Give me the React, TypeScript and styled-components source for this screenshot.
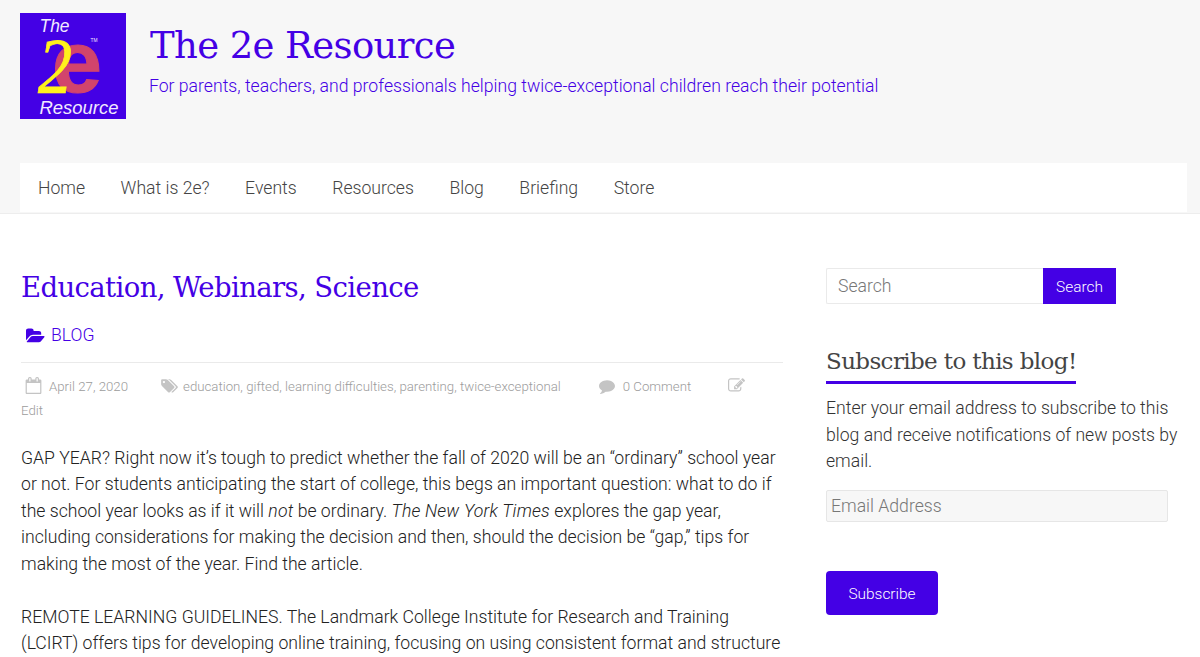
import React from 'react';
import styled, { createGlobalStyle } from 'styled-components';

const violet = '#4400e5';
const slab = `'Roboto Slab', 'DejaVu Serif', serif`;

const GlobalStyle = createGlobalStyle`
  *, *::before, *::after { box-sizing: border-box; }
  body {
    margin: 0;
    background: #fff;
    color: #333;
    font: 300 17.64px/26.5px Roboto, sans-serif;
  }
  h1, h2, h3 { margin: 0; font-weight: 400; }
  p { margin: 0; font-weight: 300; }
  em { letter-spacing: 0.2px; }
  a { color: inherit; text-decoration: none; }
`;

const Page = styled.div`
  height: 657px;
  overflow: hidden;
`;

const Header = styled.header`
  height: 214px;
  padding: 13px 13px 0 20px;
  background: #f7f7f7;
  border-bottom: 1px solid #ededed;
`;

const Brand = styled.div`
  display: flex;
  gap: 23px;
  height: 150px;
`;

const Logo = styled.svg`
  flex: none;
  width: 106px;
  height: 106px;
`;

const BrandText = styled.div`
  padding-top: 10px;
  color: ${violet};
  white-space: nowrap;
`;

const SiteTitle = styled.h1`
  padding-left: 1px;
  font-family: ${slab};
  font-size: 37px;
  line-height: 46px;
  letter-spacing: -0.62px;
`;

const Tagline = styled.p`
  padding-top: 4px;
`;

const Nav = styled.nav`
  display: flex;
  gap: 35.5px;
  height: 49px;
  padding: 12px 18px 0;
  background: #fff;
  color: #444;
`;

const Columns = styled.div`
  display: flex;
  gap: 43px;
  padding: 54px 20px 0 21px;
`;

const Article = styled.main`
  flex: none;
  width: 762px;
`;

const PostTitle = styled.h2`
  color: ${violet};
  font-family: ${slab};
  font-size: 27.5px;
  line-height: 38px;
  letter-spacing: -0.62px;
  white-space: nowrap;
`;

const Category = styled.div`
  display: flex;
  align-items: center;
  gap: 6px;
  height: 27px;
  margin-top: 16px;
  padding-left: 5px;
  color: ${violet};
`;

const Meta = styled.div`
  display: flex;
  flex-wrap: wrap;
  margin-top: 13px;
  padding-top: 12px;
  border-top: 1px solid #eaeaea;
  color: #9c9c9c;
  font-size: 13.24px;
  line-height: 24px;
  white-space: nowrap;
`;

const MetaItem = styled.span<{ $gap: number; $after?: number }>`
  display: flex;
  align-items: center;
  gap: ${p => p.$gap}px;
  margin-right: ${p => p.$after ?? 0}px;

  &:first-child { margin-left: 4px; }
`;

const EditLink = styled.a`
  flex-basis: 100%;
`;

const Icon = styled.svg<{ $w: number; $h: number }>`
  flex: none;
  width: ${p => p.$w}px;
  height: ${p => p.$h}px;
  fill: currentColor;
`;

const MetaIcon = styled(Icon)`
  margin-bottom: 3px;
  color: #c4c4c4;
`;

const Paragraph = styled.p`
  margin-bottom: 26.5px;
  color: #222;
  white-space: nowrap;

  ${Meta} + & { margin-top: 21.6px; }
`;

const Sidebar = styled.aside`
  flex: none;
  width: 354px;
`;

const SearchForm = styled.form`
  display: flex;
  height: 36px;
`;

const SearchInput = styled.input`
  width: 217px;
  padding: 1px 11px 0;
  border: 1px solid #eaeaea;
  border-right: 0;
  border-radius: 2px 0 0 2px;
  background: #fff;
  font: inherit;
  outline: 0;
  &::placeholder { color: #777; opacity: 1; }
`;

const Button = styled.button`
  padding: 1px 0 0;
  border: 0;
  background: ${violet};
  color: #fff;
  font: 300 15.43px Roboto, sans-serif;
`;

const SearchButton = styled(Button)`
  width: 73px;
`;

const SubscribeButton = styled(Button)`
  width: 112px;
  height: 44px;
  margin-top: 49px;
  padding-top: 2px;
  border-radius: 4px;
`;

const WidgetTitle = styled.h3`
  width: 250px;
  height: 41px;
  margin: 39px 0 11px;
  border-bottom: 3px solid ${violet};
  color: #444;
  font-family: ${slab};
  font-size: 23px;
  line-height: 36px;
  letter-spacing: -0.62px;
  white-space: nowrap;
`;

const EmailInput = styled.input`
  display: block;
  width: 342px;
  height: 32px;
  margin-top: 15px;
  padding: 0 4px;
  border: 1px solid #e6e6e6;
  border-radius: 2px;
  background: #f7f7f7;
  font: inherit;
  outline: 0;
  &::placeholder { color: #777; opacity: 1; }
`;

const links = ['Home', 'What is 2e?', 'Events', 'Resources', 'Blog', 'Briefing', 'Store'];

export default function App() {
  return (
    <Page>
      <GlobalStyle />
      <Header>
        <Brand>
          <Logo viewBox="0 0 106 106" role="img" aria-label="The 2e Resource">
            <rect width="106" height="106" fill="#4400e5" />
            <text x="19.5" y="18.5" fill="#f2eaff" fontFamily="Liberation Sans" fontStyle="italic" fontSize="18" textLength="30" lengthAdjust="spacingAndGlyphs">The</text>
            <text x="32" y="79" fill="#d2446c" stroke="#d2446c" fontFamily="Liberation Sans" fontWeight="700" fontSize="88" textLength="50" lengthAdjust="spacingAndGlyphs">e</text>
            <text x="18" y="79" fill="#fff21c" stroke="#fff21c" strokeWidth="0.8" fontFamily="Liberation Serif" fontStyle="italic" fontSize="78" textLength="34" lengthAdjust="spacingAndGlyphs">2</text>
            <text x="70.5" y="28.5" fill="#f2eaff" fontFamily="Liberation Sans" fontSize="4.5" textLength="7" lengthAdjust="spacingAndGlyphs">TM</text>
            <text x="19.5" y="100.5" fill="#f2eaff" fontFamily="Liberation Sans" fontStyle="italic" fontSize="18" textLength="79" lengthAdjust="spacingAndGlyphs">Resource</text>
          </Logo>
          <BrandText>
            <SiteTitle>The 2e Resource</SiteTitle>
            <Tagline>For parents, teachers, and professionals helping twice-exceptional children reach their potential</Tagline>
          </BrandText>
        </Brand>
        <Nav>
          {links.map(l => <a key={l}>{l}</a>)}
        </Nav>
      </Header>
      <Columns>
        <Article>
          <PostTitle>Education, Webinars, Science</PostTitle>
          <Category>
            <Icon $w={19} $h={18} viewBox="0 0 1920 1792">
              <path d="M1879 952q0 31-31 66l-336 396q-43 51-120.5 86.5t-143.5 35.5h-1088q-34 0-60.5-13t-26.5-43q0-31 31-66l336-396q43-51 120.5-86.5t143.5-35.5h1088q34 0 60.5 13t26.5 43zm-343-344v160h-832q-94 0-197 47.5t-164 119.5l-337 396-5 6q0-4-.5-12.5t-.5-12.5v-960q0-92 66-158t158-66h320q92 0 158 66t66 158v32h544q92 0 158 66t66 158z" />
            </Icon>
            <a>BLOG</a>
          </Category>
          <Meta>
            <MetaItem $gap={7} $after={32}>
              <MetaIcon $w={17} $h={17} viewBox="0 0 1792 1792">
                <path d="M192 1664h1408v-1024h-1408v1024zm384-1216v-288q0-14-9-23t-23-9h-64q-14 0-23 9t-9 23v288q0 14 9 23t23 9h64q14 0 23-9t9-23zm768 0v-288q0-14-9-23t-23-9h-64q-14 0-23 9t-9 23v288q0 14 9 23t23 9h64q14 0 23-9t9-23zm384-64v1280q0 52-38 90t-90 38h-1408q-52 0-90-38t-38-90v-1280q0-52 38-90t90-38h128v-96q0-66 47-113t113-47h64q66 0 113 47t47 113v96h384v-96q0-66 47-113t113-47h64q66 0 113 47t47 113v96h128q52 0 90 38t38 90z" />
              </MetaIcon>
              April 27, 2020
            </MetaItem>
            <MetaItem $gap={5} $after={38}>
              <MetaIcon $w={18} $h={16} viewBox="0 0 2048 1792">
                <path d="M576 448q0-53-37.5-90.5t-90.5-37.5-90.5 37.5-37.5 90.5 37.5 90.5 90.5 37.5 90.5-37.5 37.5-90.5zm1067 576q0 53-37 90l-491 492q-39 37-91 37-53 0-90-37l-715-716q-38-37-64.5-101t-26.5-117v-416q0-52 38-90t90-38h416q53 0 117 26.5t102 64.5l715 714q37 39 37 91zm384 0q0 53-37 90l-491 492q-39 37-91 37-36 0-59-14t-53-45l470-470q37-37 37-90 0-52-37-91l-715-714q-38-38-102-64.5t-117-26.5h224q53 0 117 26.5t102 64.5l715 714q37 39 37 91z" />
              </MetaIcon>
              education, gifted, learning difficulties, parenting, twice-exceptional
            </MetaItem>
            <MetaItem $gap={8} $after={37}>
              <MetaIcon $w={16} $h={16} viewBox="0 0 1792 1792">
                <path d="M1792 896q0 174-120 321.5t-326 233-450 85.5q-70 0-145-8-198 175-460 242-49 14-114 22-17 2-30.5-9t-17.5-29v-1q-3-4-.5-12t2-10 4.5-9.5l6-9 7-8.5 8-9q7-8 31-34.5t34.5-38 31-39.5 32.5-51 27-59 26-76q-157-89-247.5-220t-90.5-281q0-130 71-248.5t191-204.5 286-136.5 348-50.5q244 0 450 85.5t326 233 120 321.5z" />
              </MetaIcon>
              0 Comment
            </MetaItem>
            <MetaItem $gap={0}>
              <MetaIcon $w={17} $h={17} viewBox="0 0 1792 1792">
                <path d="M888 1184l116-116-152-152-116 116v56h96v96h56zm440-720q-16-16-33 1l-350 350q-17 17-1 33t33-1l350-350q17-17 1-33zm80 594v190q0 119-84.5 203.5t-203.5 84.5h-832q-119 0-203.5-84.5t-84.5-203.5v-832q0-119 84.5-203.5t203.5-84.5h832q63 0 117 25 15 7 18 23 3 17-9 29l-49 49q-14 14-32 8-23-6-45-6h-832q-66 0-113 47t-47 113v832q0 66 47 113t113 47h832q66 0 113-47t47-113v-126q0-13 9-22l64-64q15-15 35-7t20 29zm-96-738l288 288-672 672h-288v-288zm444 132l-92 92-288-288 92-92q28-28 68-28t68 28l152 152q28 28 28 68t-28 68z" />
              </MetaIcon>
            </MetaItem>
            <EditLink>Edit</EditLink>
          </Meta>
          <Paragraph>
            GAP YEAR? Right now it’s tough to predict whether the fall of 2020 will be an “ordinary” school year<br />
            or not. For students anticipating the start of college, this begs an important question: what to do if<br />
            the school year looks as if it will <em>not</em> be ordinary. <em>The New York Times</em> explores the gap year,<br />
            including considerations for making the decision and then, should the decision be “gap,” tips for<br />
            making the most of the year. Find the article.
          </Paragraph>
          <Paragraph>
            REMOTE LEARNING GUIDELINES. The Landmark College Institute for Research and Training<br />
            (LCIRT) offers tips for developing online training, focusing on using consistent format and structure
          </Paragraph>
        </Article>
        <Sidebar>
          <SearchForm>
            <SearchInput placeholder="Search" />
            <SearchButton type="button">Search</SearchButton>
          </SearchForm>
          <WidgetTitle>Subscribe to this blog!</WidgetTitle>
          <p>
            Enter your email address to subscribe to this blog and receive notifications of new posts by email.
          </p>
          <EmailInput placeholder="Email Address" />
          <SubscribeButton>Subscribe</SubscribeButton>
        </Sidebar>
      </Columns>
    </Page>
  );
}
